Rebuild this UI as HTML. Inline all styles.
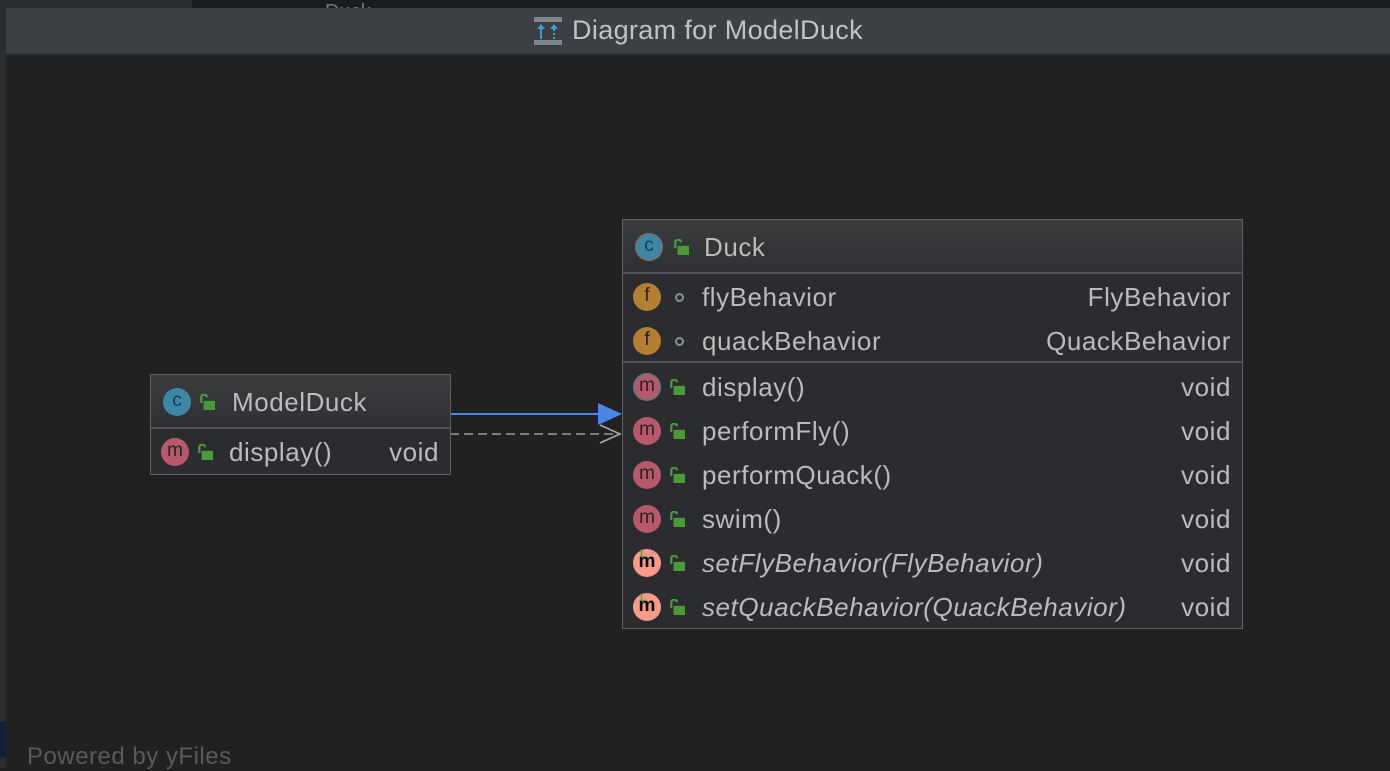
<!DOCTYPE html>
<html><head><meta charset="utf-8"><style>
*{margin:0;padding:0;box-sizing:border-box}
body{width:1390px;height:768px;background:#212121;position:relative;overflow:hidden;font-family:"Liberation Sans",sans-serif;color:#bbbbbb}
.a{position:absolute}
.box{position:absolute;background:#2b2c2f;border:1px solid #5f6062}
.hdr{position:absolute;left:0;right:0;top:0;background:linear-gradient(#3b3c3e,#2f3033);border-bottom:2px solid #505153}
.row{position:absolute;left:0;right:0;height:44px;font-size:26px;letter-spacing:0.55px;line-height:44px;white-space:nowrap}
.ic{position:absolute;width:28px;height:28px;border-radius:50%;text-align:center;line-height:26px;font-size:19px;letter-spacing:0;color:#222;top:8px}
.m{background:#b8596b}
.f{background:#b37f30}
.c{background:#3c87a6}
.ms{background:#f8998a;color:#000;font-weight:bold}
.lock{position:absolute;top:14px;width:16px;height:16px}
.t{position:absolute}
.r{position:absolute;right:11px}
.dot{position:absolute;top:18px;width:9px;height:9px;border:2px solid #8a8f97;border-radius:50%}
</style></head><body>
<div class="a" style="left:0;top:0;width:192px;height:9px;background:#2c2d30"></div>
<div class="a" style="left:192px;top:0;width:1198px;height:9px;background:#1c1c1c"></div>
<div class="a" style="left:325px;top:2px;font-size:20px;color:#777;height:7px;overflow:hidden;line-height:20px">Duck</div>
<div class="a" style="left:4px;top:8px;width:1386px;height:47px;background:#3c3f44;border-bottom:2px solid #313336"></div>
<div class="a" style="left:0;top:8px;width:6px;height:760px;background:#2a2c2f"></div>
<div class="a" style="left:0;top:722px;width:6px;height:35px;background:#0e2236"></div>
<svg class="a" style="left:534px;top:17px" width="28" height="28" viewBox="0 0 28 28"><rect x="0" y="0" width="28" height="5" fill="#7f868e"/><rect x="0" y="23" width="28" height="5" fill="#7f868e"/><path d="M7 22V10" stroke="#3ba0d8" stroke-width="2"/><path d="M3 12l4-5 4 5z" fill="#3ba0d8"/><path d="M20 22V10" stroke="#3ba0d8" stroke-width="2" stroke-dasharray="2 2"/><path d="M16 12l4-5 4 5z" fill="#3ba0d8"/></svg>
<div class="a" style="left:572px;top:15px;font-size:27px;letter-spacing:0.35px;color:#c0c2c4">Diagram for ModelDuck</div>
<div class="a" style="left:27px;top:743px;font-size:24px;letter-spacing:0.5px;color:#5a5a5a">Powered by yFiles</div>

<svg class="a" style="left:450px;top:400px" width="175" height="45"><path d="M0 14H150" stroke="#4a86e8" stroke-width="2"/><path d="M148 3L172 14 148 25z" fill="#4a86e8"/><path d="M0 34H170" stroke="#9a9a9a" stroke-width="1.6" stroke-dasharray="9 5"/><path d="M150 25L170 34 150 43" stroke="#aaa" stroke-width="1.6" fill="none"/></svg>

<div class="box" style="left:150px;top:374px;width:301px;height:101px">
 <div class="hdr" style="height:54px"></div>
 <div class="row" style="top:5px"><div class="ic c" style="left:12px;color:#1c3a48">c</div><svg class="lock" style="left:48px" viewBox="0 0 14 14"><rect x="4" y="6" width="10" height="8" fill="#4a9a3a"/><path d="M2 8V3a2.5 2.5 0 0 1 5 0" stroke="#4a9a3a" stroke-width="2" fill="none"/></svg><span class="t" style="left:81px">ModelDuck</span></div>
 <div class="row" style="top:55px"><div class="ic m" style="left:10px">m</div><svg class="lock" style="left:46px" viewBox="0 0 14 14"><rect x="4" y="6" width="10" height="8" fill="#4a9a3a"/><path d="M2 8V3a2.5 2.5 0 0 1 5 0" stroke="#4a9a3a" stroke-width="2" fill="none"/></svg><span class="t" style="left:78px">display()</span><span class="r">void</span></div>
</div>

<div class="box" style="left:622px;top:219px;width:621px;height:410px">
 <div class="hdr" style="height:54px"></div>
 <div class="a" style="left:0;right:0;top:141px;height:2px;background:#505153"></div>
 <div class="row" style="top:5px"><div class="ic c" style="left:12px;color:#1c3a48;box-shadow:0 0 0 2px #6d7378 inset">c</div><svg class="lock" style="left:50px" viewBox="0 0 14 14"><rect x="4" y="6" width="10" height="8" fill="#4a9a3a"/><path d="M2 8V3a2.5 2.5 0 0 1 5 0" stroke="#4a9a3a" stroke-width="2" fill="none"/></svg><span class="t" style="left:81px">Duck</span></div>
 <div class="row" style="top:55px"><div class="ic f" style="left:10px">f</div><div class="dot" style="left:52px"></div><span class="t" style="left:79px">flyBehavior</span><span class="r">FlyBehavior</span></div>
 <div class="row" style="top:99px"><div class="ic f" style="left:10px">f</div><div class="dot" style="left:52px"></div><span class="t" style="left:79px">quackBehavior</span><span class="r">QuackBehavior</span></div>
 <div class="row" style="top:145px"><div class="ic m" style="left:10px;box-shadow:0 0 0 2px #6d7378 inset">m</div><svg class="lock" style="left:46px" viewBox="0 0 14 14"><rect x="4" y="6" width="10" height="8" fill="#4a9a3a"/><path d="M2 8V3a2.5 2.5 0 0 1 5 0" stroke="#4a9a3a" stroke-width="2" fill="none"/></svg><span class="t" style="left:79px">display()</span><span class="r">void</span></div>
 <div class="row" style="top:189px"><div class="ic m" style="left:10px">m</div><svg class="lock" style="left:46px" viewBox="0 0 14 14"><rect x="4" y="6" width="10" height="8" fill="#4a9a3a"/><path d="M2 8V3a2.5 2.5 0 0 1 5 0" stroke="#4a9a3a" stroke-width="2" fill="none"/></svg><span class="t" style="left:79px">performFly()</span><span class="r">void</span></div>
 <div class="row" style="top:233px"><div class="ic m" style="left:10px">m</div><svg class="lock" style="left:46px" viewBox="0 0 14 14"><rect x="4" y="6" width="10" height="8" fill="#4a9a3a"/><path d="M2 8V3a2.5 2.5 0 0 1 5 0" stroke="#4a9a3a" stroke-width="2" fill="none"/></svg><span class="t" style="left:79px">performQuack()</span><span class="r">void</span></div>
 <div class="row" style="top:277px"><div class="ic m" style="left:10px">m</div><svg class="lock" style="left:46px" viewBox="0 0 14 14"><rect x="4" y="6" width="10" height="8" fill="#4a9a3a"/><path d="M2 8V3a2.5 2.5 0 0 1 5 0" stroke="#4a9a3a" stroke-width="2" fill="none"/></svg><span class="t" style="left:79px">swim()</span><span class="r">void</span></div>
 <div class="row" style="top:321px"><div class="ic ms" style="left:10px">m</div><span class="a" style="left:17px;top:-9px;font-size:11px;color:#3ab43a;font-weight:bold">L</span><svg class="lock" style="left:46px" viewBox="0 0 14 14"><rect x="4" y="6" width="10" height="8" fill="#4a9a3a"/><path d="M2 8V3a2.5 2.5 0 0 1 5 0" stroke="#4a9a3a" stroke-width="2" fill="none"/></svg><span class="t" style="left:79px;font-style:italic">setFlyBehavior(FlyBehavior)</span><span class="r">void</span></div>
 <div class="row" style="top:365px"><div class="ic ms" style="left:10px">m</div><span class="a" style="left:17px;top:-9px;font-size:11px;color:#3ab43a;font-weight:bold">L</span><svg class="lock" style="left:46px" viewBox="0 0 14 14"><rect x="4" y="6" width="10" height="8" fill="#4a9a3a"/><path d="M2 8V3a2.5 2.5 0 0 1 5 0" stroke="#4a9a3a" stroke-width="2" fill="none"/></svg><span class="t" style="left:79px;font-style:italic">setQuackBehavior(QuackBehavior)</span><span class="r">void</span></div>
</div>
</body></html>
